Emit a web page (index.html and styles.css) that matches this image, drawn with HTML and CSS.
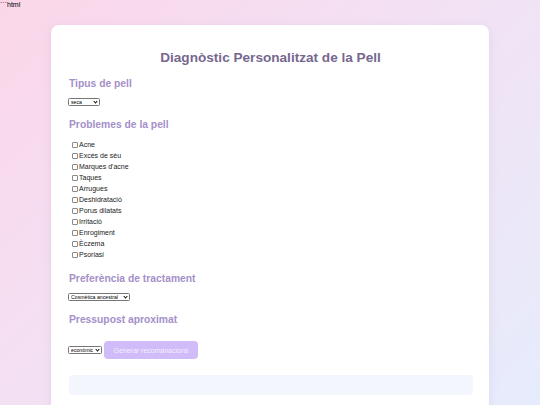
FILE: index.html
```html
<!DOCTYPE html>
<html lang="ca">
<head>
<meta charset="utf-8">
<title>Diagnòstic Personalitzat de la Pell</title>
<link rel="stylesheet" href="styles.css">
</head>
<body>
<div class="stray">```html</div>
<main class="card">
  <h1 class="title">Diagnòstic Personalitzat de la Pell</h1>

  <h2 class="section">Tipus de pell</h2>
  <div class="select-wrap">
    <select class="pick pick-skin">
      <option>seca</option>
      <option>grassa</option>
      <option>mixta</option>
      <option>normal</option>
    </select>
  </div>

  <h2 class="section">Problemes de la pell</h2>
  <div class="checks">
    <label class="check"><input type="checkbox">Acne</label>
    <label class="check"><input type="checkbox">Excés de sèu</label>
    <label class="check"><input type="checkbox">Marques d'acne</label>
    <label class="check"><input type="checkbox">Taques</label>
    <label class="check"><input type="checkbox">Arrugues</label>
    <label class="check"><input type="checkbox">Deshidratació</label>
    <label class="check"><input type="checkbox">Porus dilatats</label>
    <label class="check"><input type="checkbox">Irritació</label>
    <label class="check"><input type="checkbox">Enrogiment</label>
    <label class="check"><input type="checkbox">Èczema</label>
    <label class="check"><input type="checkbox">Psoriasi</label>
  </div>

  <h2 class="section">Preferència de tractament</h2>
  <div class="select-wrap">
    <select class="pick pick-pref">
      <option>Cosmètica ancestral</option>
      <option>Cosmètica moderna</option>
    </select>
  </div>

  <h2 class="section">Pressupost aproximat</h2>
  <div class="actions">
    <div class="select-wrap">
      <select class="pick pick-budget">
        <option>econòmic</option>
        <option>mitjà</option>
        <option>alt</option>
      </select>
    </div>
    <button class="generate" disabled>Generar recomanacions</button>
  </div>

  <div class="results"></div>
</main>
</body>
</html>
```

FILE: styles.css
```css
html, body {
  margin: 0;
  padding: 0;
  height: 100%;
}

body {
  font-family: "Liberation Sans", Arial, sans-serif;
  background: linear-gradient(135deg, #fbd6e9 0%, #f3e1f3 45%, #e6ecfc 100%);
  overflow: hidden;
}

.stray {
  font-size: 7px;
  line-height: 9px;
  color: #000;
}

.card {
  width: 438px;
  margin: 16px auto 0;
  background: #ffffff;
  border-radius: 8px;
  box-shadow: 0 2px 10px rgba(160, 120, 190, 0.15);
  padding: 24px 16px 40px 17px;
  box-sizing: border-box;
}

.title {
  margin: 0 0 9px;
  font-size: 13.6px;
  line-height: 18px;
  font-weight: bold;
  text-align: center;
  color: #76678f;
}

.section {
  margin: 11px 0 7px 1px;
  font-size: 10.3px;
  line-height: 15px;
  font-weight: bold;
  color: #a590ca;
}

.title + .section {
  margin-top: 0;
}

.select-wrap {
  position: relative;
  width: max-content;
}

.select-wrap::after {
  content: "";
  position: absolute;
  right: 3px;
  top: 1.5px;
  width: 2px;
  height: 2px;
  border-right: 1px solid #111;
  border-bottom: 1px solid #111;
  transform: rotate(45deg);
  pointer-events: none;
}

.pick {
  display: block;
  appearance: none;
  -webkit-appearance: none;
  font-family: "Liberation Sans", Arial, sans-serif;
  font-size: 5.2px;
  height: 8px;
  line-height: 6px;
  padding: 0 8px 0 2px;
  border: 1px solid #767676;
  border-radius: 1.5px;
  background: #fff;
  color: #000;
  box-sizing: border-box;
}

.pick-skin { width: 32px; }
.pick-pref { width: 62px; }
.pick-budget { width: 34px; }

.checks {
  display: flex;
  flex-direction: column;
  margin-top: 6px;
  margin-bottom: 10px;
}

.check {
  display: flex;
  align-items: center;
  height: 11px;
  font-size: 7px;
  color: #222;
}

.check input {
  appearance: none;
  -webkit-appearance: none;
  width: 6px;
  height: 6px;
  margin: 0 1px 0 4px;
  border: 1px solid #8a8a8a;
  border-radius: 1px;
  background: #fff;
  box-sizing: border-box;
}

.actions {
  display: flex;
  align-items: center;
  gap: 2px;
  margin-top: 14px;
}

.generate {
  width: 94px;
  height: 18px;
  border: none;
  border-radius: 4px;
  background: #d0bcf9;
  color: #f4eeff;
  font-family: "Liberation Sans", Arial, sans-serif;
  font-size: 7px;
  padding: 0;
}

.results {
  margin: 16px 0 0 1px;
  height: 20px;
  background: #f4f6fe;
  border-radius: 4px;
}
```
